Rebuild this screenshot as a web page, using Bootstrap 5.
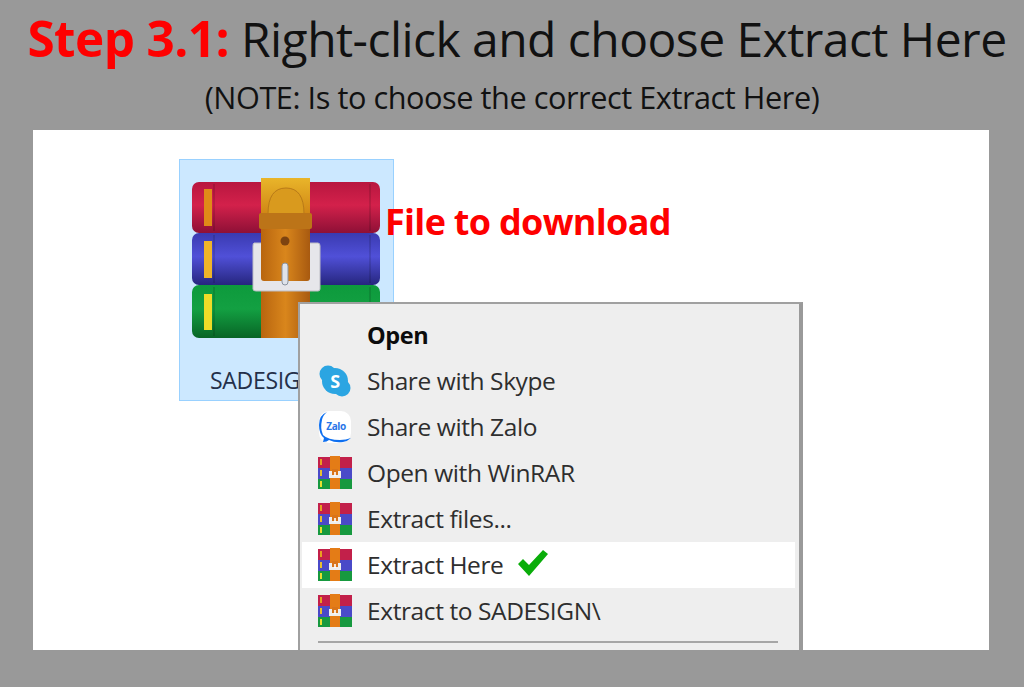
<!DOCTYPE html>
<html lang="en">
<head>
    <meta charset="UTF-8">
    <meta name="viewport" content="width=device-width, initial-scale=1.0">
    <title>Step 3.1: Extract Here</title>
    <link href="https://cdn.jsdelivr.net/npm/bootstrap@5.3.2/dist/css/bootstrap.min.css" rel="stylesheet">
    <style>
        body {
            background: #999999;
            font-family: "Open Sans", "Liberation Sans", sans-serif;
            height: 687px;
            overflow: hidden;
        }
        .step-title {
            font-size: 48px;
            line-height: 62px;
            height: 70px;
            padding: 8px 0 0 10px;
            color: #111;
            letter-spacing: -0.55px;
            white-space: nowrap;
        }
        .step-title b { color: #fe0000; font-weight: 700; font-size: 49.4px; line-height: 1; }
        .step-note {
            font-size: 30.7px;
            line-height: 40px;
            margin-top: 7px;
            color: #111;
            letter-spacing: -0.45px;
        }
        .sheet {
            position: relative;
            width: 956px;
            height: 520px;
            margin: 13px 0 0 33px;
            background: #fff;
            overflow: hidden;
            padding: 29px 0 0 146px;
        }
        .file-tile {
            width: 215px;
            height: 242px;
            background: #cce8ff;
            border: 1px solid #99d1ff;
            flex: none;
        }
        .file-tile svg { display: block; }
        .file-name {
            font-size: 23px;
            line-height: 30px;
            color: #24304a;
            padding-left: 30px;
            letter-spacing: -0.3px;
            white-space: nowrap;
        }
        .file-tag {
            font-size: 36px;
            line-height: 44px;
            font-weight: 700;
            color: #fe0000;
            margin: 41px 0 0 -9px;
            letter-spacing: -0.7px;
            white-space: nowrap;
            position: relative;
        }
        .ctx-menu {
            position: absolute;
            left: 265px;
            top: 172px;
            width: 505px;
            height: 360px;
            background: #eeeeee;
            border: 2px solid #a0a0a0;
            border-right: 4px solid #9a9a9a;
            padding: 8px 4px 0 2px;
        }
        .ctx-row {
            height: 46px;
            display: flex;
            align-items: center;
            font-size: 24.5px;
            color: #2e2e2e;
            letter-spacing: -0.4px;
            white-space: nowrap;
        }
        .ctx-row.on { background: #fff; }
        .ctx-row strong { color: #0c0c0c; font-weight: 700; font-size: 23.5px; padding-top: 2px; }
        .ctx-ico {
            width: 34px;
            height: 34px;
            margin: 0 15px 0 16px;
            flex: none;
        }
        .ctx-tick { margin: 0 0 5px 14px; }
        .ctx-line {
            height: 2px;
            margin: 7px 17px 0 16px;
            background: #a6a6a6;
        }
    </style>
</head>
<body>
    <svg width="0" height="0" class="position-absolute">
        <defs>
            <linearGradient id="redBook" x1="0" y1="0" x2="0" y2="1">
                <stop offset="0" stop-color="#b8163f"/><stop offset=".45" stop-color="#d3214b"/><stop offset="1" stop-color="#8e1036"/>
            </linearGradient>
            <linearGradient id="blueBook" x1="0" y1="0" x2="0" y2="1">
                <stop offset="0" stop-color="#3a3ab0"/><stop offset=".45" stop-color="#5050d8"/><stop offset="1" stop-color="#26267e"/>
            </linearGradient>
            <linearGradient id="greenBook" x1="0" y1="0" x2="0" y2="1">
                <stop offset="0" stop-color="#0d9a3c"/><stop offset=".45" stop-color="#13a042"/><stop offset="1" stop-color="#086526"/>
            </linearGradient>
            <linearGradient id="strap" x1="0" y1="0" x2="1" y2="0">
                <stop offset="0" stop-color="#b8650f"/><stop offset=".5" stop-color="#d9861c"/><stop offset="1" stop-color="#a85a10"/>
            </linearGradient>
            <linearGradient id="flap" x1="0" y1="0" x2="0" y2="1">
                <stop offset="0" stop-color="#e9b52a"/><stop offset="1" stop-color="#c9790f"/>
            </linearGradient>
            <symbol id="rarSmall" viewBox="0 0 34 34">
                <rect x="0" y="1" width="34" height="11" fill="#c2204a"/>
                <rect x="0" y="12" width="34" height="11" fill="#4a4ac8"/>
                <rect x="0" y="23" width="34" height="10" fill="#17993f"/>
                <rect x="2" y="3" width="2" height="6" fill="#e8a020"/>
                <rect x="2" y="14" width="2" height="6" fill="#e8c030"/>
                <rect x="2" y="25" width="2" height="6" fill="#e8e030"/>
                <rect x="12" y="0" width="10" height="33" fill="#e47c16"/>
                <path d="M11 15h12v7H11z" fill="#eee"/>
                <path d="M14 13h6v6h-6z" fill="#d9741a"/>
                <rect x="16.2" y="16" width="1.6" height="4" fill="#fff"/>
            </symbol>
        </defs>
    </svg>

    <div class="text-center">
        <div class="step-title"><b>Step 3.1:</b> Right-click and choose Extract Here</div>
        <div class="step-note">(NOTE: Is to choose the correct Extract Here)</div>
    </div>

    <div class="sheet d-flex align-items-start">
        <div class="file-tile">
            <svg width="213" height="205" viewBox="0 0 213 205">
                <rect x="12" y="22" width="188" height="51" rx="7" fill="url(#redBook)"/>
                <rect x="12" y="73" width="188" height="52" rx="7" fill="url(#blueBook)"/>
                <rect x="12" y="125" width="188" height="53" rx="7" fill="url(#greenBook)"/>
                <path d="M34 24v47M34 75v48M34 127v49M190 24v47M190 75v48M190 127v49" stroke="#000" stroke-opacity=".12" stroke-width="2"/>
                <rect x="24" y="29" width="8" height="37" fill="#e08a18"/>
                <rect x="24" y="81" width="8" height="37" fill="#efb52a"/>
                <rect x="24" y="134" width="8" height="36" fill="#eedc28"/>
                <rect x="81" y="130" width="49" height="48" fill="url(#strap)"/>
                <path d="M74 83h64q2 0 2 3v43q0 2-2 2H76q-3 0-3-2V86q0-3 1-3z" fill="#e6e6ea" stroke="#bdbdc4"/>
                <rect x="81" y="18" width="49" height="103" rx="3" fill="url(#strap)"/>
                <path d="M81 18h49v46H81z" fill="url(#flap)"/>
                <path d="M88 54q0-26 18-26t18 26z" fill="#d99a1e" stroke="#b87a18"/>
                <rect x="79" y="53" width="53" height="16" rx="2" fill="#bc7418"/>
                <circle cx="105" cy="81" r="4.5" fill="#7d4310"/>
                <rect x="102" y="103" width="6" height="22" rx="3" fill="#dfe3ea" stroke="#8a93a0"/>
            </svg>
            <div class="file-name">SADESIGN</div>
        </div>
        <div class="file-tag">File to download</div>

        <div class="ctx-menu">
            <div class="ctx-row">
                <span class="ctx-ico"></span><strong>Open</strong>
            </div>
            <div class="ctx-row">
                <svg class="ctx-ico" viewBox="0 0 34 34">
                    <circle cx="10" cy="10" r="8.5" fill="#2ba5e2"/>
                    <circle cx="24" cy="24" r="8.5" fill="#2ba5e2"/>
                    <circle cx="17" cy="17" r="13" fill="#2ba5e2"/>
                    <text x="17" y="23.5" text-anchor="middle" font-size="18" font-weight="700" fill="#fff" font-family="Open Sans, sans-serif">S</text>
                </svg>
                Share with Skype
            </div>
            <div class="ctx-row">
                <svg class="ctx-ico" viewBox="0 0 34 34">
                    <rect x="1" y="1" width="32" height="32" rx="10" fill="#fff"/>
                    <path d="M9 2Q1 5 1 15q0 9 5 13l-1 4q4 0 6-2 6 3 14 2 5-1 8-4-5 2-11 2-12 0-17-5Q2 18 4 10q1-5 5-8z" fill="#0d6ff0"/>
                    <text x="18" y="20" text-anchor="middle" font-size="10" font-weight="700" fill="#2a76e8" font-family="Open Sans, sans-serif">Zalo</text>
                </svg>
                Share with Zalo
            </div>
            <div class="ctx-row">
                <svg class="ctx-ico"><use href="#rarSmall"/></svg>
                Open with WinRAR
            </div>
            <div class="ctx-row">
                <svg class="ctx-ico"><use href="#rarSmall"/></svg>
                Extract files...
            </div>
            <div class="ctx-row on">
                <svg class="ctx-ico"><use href="#rarSmall"/></svg>
                Extract Here
                <svg class="ctx-tick" width="32" height="28" viewBox="0 0 32 28">
                    <path d="M1 15l5-5 6 6L26 1l5 4-19 22z" fill="#0aad0a"/>
                </svg>
            </div>
            <div class="ctx-row">
                <svg class="ctx-ico"><use href="#rarSmall"/></svg>
                Extract to SADESIGN\
            </div>
            <div class="ctx-line"></div>
        </div>
    </div>
</body>
</html>
